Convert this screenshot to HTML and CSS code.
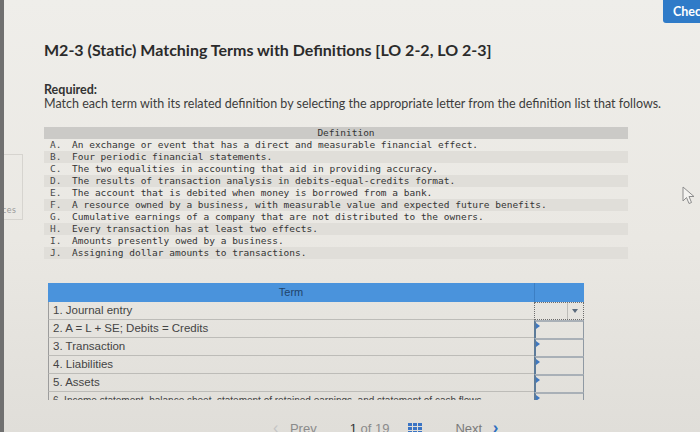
FILE: index.html
```html
<!DOCTYPE html>
<html lang="en">
<head>
    <meta charset="UTF-8">
    <meta name="viewport" content="width=device-width, initial-scale=1.0">
    <title>M2-3 (Static) Matching Terms with Definitions</title>
    <link rel="stylesheet" href="styles.css">
</head>
<body>
    <div class="screen">
        <!-- side tab, mostly off screen -->
        <div class="side-tab"><span>ces</span></div>

        <div class="topbar">
            <button class="check-btn">Check my work</button>
        </div>

        <div class="content">
            <h1>M2-3 (Static) Matching Terms with Definitions [LO 2-2, LO 2-3]</h1>

            <p class="required">Required:</p>
            <p class="instructions">Match each term with its related definition by selecting the appropriate letter from the definition list that follows.</p>

            <!-- definitions -->
            <div class="definitions">
                <div class="def-head">Definition</div>
                <div class="def-row"><span class="def-letter">A.</span><span>An exchange or event that has a direct and measurable financial effect.</span></div>
                <div class="def-row"><span class="def-letter">B.</span><span>Four periodic financial statements.</span></div>
                <div class="def-row"><span class="def-letter">C.</span><span>The two equalities in accounting that aid in providing accuracy.</span></div>
                <div class="def-row"><span class="def-letter">D.</span><span>The results of transaction analysis in debits-equal-credits format.</span></div>
                <div class="def-row"><span class="def-letter">E.</span><span>The account that is debited when money is borrowed from a bank.</span></div>
                <div class="def-row"><span class="def-letter">F.</span><span>A resource owned by a business, with measurable value and expected future benefits.</span></div>
                <div class="def-row"><span class="def-letter">G.</span><span>Cumulative earnings of a company that are not distributed to the owners.</span></div>
                <div class="def-row"><span class="def-letter">H.</span><span>Every transaction has at least two effects.</span></div>
                <div class="def-row"><span class="def-letter">I.</span><span>Amounts presently owed by a business.</span></div>
                <div class="def-row"><span class="def-letter">J.</span><span>Assigning dollar amounts to transactions.</span></div>
            </div>

            <!-- terms -->
            <div class="terms">
                <div class="term-head">
                    <div class="term-head-label">Term</div>
                    <div class="term-head-pick"></div>
                </div>
                <div class="term-row">
                    <div class="term-cell">1. Journal entry</div>
                    <div class="pick-cell">
                        <div class="select"><span class="select-box"></span><span class="select-arrow"></span></div>
                    </div>
                </div>
                <div class="term-row">
                    <div class="term-cell">2. A = L + SE; Debits = Credits</div>
                    <div class="pick-cell"><div class="pick"></div></div>
                </div>
                <div class="term-row">
                    <div class="term-cell">3. Transaction</div>
                    <div class="pick-cell"><div class="pick"></div></div>
                </div>
                <div class="term-row">
                    <div class="term-cell">4. Liabilities</div>
                    <div class="pick-cell"><div class="pick"></div></div>
                </div>
                <div class="term-row">
                    <div class="term-cell">5. Assets</div>
                    <div class="pick-cell"><div class="pick"></div></div>
                </div>
                <div class="term-row">
                    <div class="term-cell term-long">6. Income statement, balance sheet, statement of retained earnings, and statement of cash flows</div>
                    <div class="pick-cell"><div class="pick"></div></div>
                </div>
            </div>

            <!-- pagination -->
            <div class="pager">
                <span class="pager-prev"><span class="chev-left">&lsaquo;</span> Prev</span>
                <span class="pager-count"><b>1</b> of 19</span>
                <span class="pager-grid">
                    <svg width="14" height="11" viewBox="0 0 14 11">
                        <rect x="0" y="0" width="4" height="3" fill="#3b74c4"/>
                        <rect x="5" y="0" width="4" height="3" fill="#3b74c4"/>
                        <rect x="10" y="0" width="4" height="3" fill="#3b74c4"/>
                        <rect x="0" y="4" width="4" height="3" fill="#3b74c4"/>
                        <rect x="5" y="4" width="4" height="3" fill="#3b74c4"/>
                        <rect x="10" y="4" width="4" height="3" fill="#3b74c4"/>
                        <rect x="0" y="8" width="4" height="3" fill="#3b74c4"/>
                        <rect x="5" y="8" width="4" height="3" fill="#3b74c4"/>
                        <rect x="10" y="8" width="4" height="3" fill="#3b74c4"/>
                    </svg>
                </span>
                <span class="pager-next">Next <span class="chev-right">&rsaquo;</span></span>
            </div>
        </div>

        <!-- mouse pointer -->
        <svg class="cursor" width="14" height="20" viewBox="0 0 14 20">
            <path d="M1 1 L1 15 L4.5 11.5 L7 17.5 L9.5 16.5 L7 10.5 L12 10.5 Z" fill="#f4f3f0" stroke="#8d8d8d" stroke-width="1"/>
        </svg>
    </div>
</body>
</html>
```

FILE: styles.css
```css
/* page */
body {
    margin: 0;
    overflow: hidden;
    font-family: Lato, "Open Sans", sans-serif;
    color: #333;
    background: linear-gradient(to bottom, #efeeea 0%, #eae8e3 55%, #e0ded9 100%);
}

.screen {
    position: relative;
    height: 432px;
    border-left: 4px solid #707070;
    overflow: hidden;
}

/* side tab */
.side-tab {
    position: absolute;
    left: 0;
    top: 154px;
    width: 18px;
    height: 64px;
    border: 1px solid #d6d4cf;
    border-left: none;
}

.side-tab span {
    position: absolute;
    left: -2px;
    bottom: 4px;
    font-size: 9px;
    color: #9a9a9a;
    letter-spacing: 0.5px;
}

/* top bar */
.topbar {
    display: flex;
    justify-content: flex-end;
    height: 23px;
}

.check-btn {
    width: 110px;
    margin-right: -73px;
    padding: 0 0 0 10px;
    text-align: left;
    white-space: nowrap;
    font-family: Lato, sans-serif;
    font-size: 12.5px;
    font-weight: 700;
    color: #fff;
    background-color: #2f7bc8;
    border: none;
    border-radius: 0 0 0 3px;
}

.content {
    padding-left: 40px;
}

/* heading */
h1 {
    margin: 17px 0 0;
    font-size: 16px;
    line-height: 20px;
    font-weight: 700;
    color: #2b2b2b;
}

.required {
    margin: 23px 0 0;
    font-size: 12.5px;
    line-height: 14px;
    font-weight: 700;
    color: #333;
}

.instructions {
    margin: 0;
    font-size: 12.5px;
    line-height: 14px;
    color: #3c3c3c;
}

/* definitions list */
.definitions {
    width: 584px;
    margin-top: 16px;
    font-family: "DejaVu Sans Mono", "Liberation Mono", monospace;
    font-size: 9.5px;
    color: #343434;
}

.def-head {
    height: 12px;
    line-height: 12px;
    padding-left: 20px;
    text-align: center;
    background-color: #cbcac7;
}

.def-row {
    display: flex;
    height: 12px;
    line-height: 12px;
}

.def-row:nth-child(odd) {
    background-color: #e0ded9;
}

.def-letter {
    width: 28px;
    padding-left: 6px;
    box-sizing: border-box;
    color: #4a4a4a;
}

/* terms table */
.terms {
    width: 536px;
    height: 117px;
    margin-top: 24px;
    margin-left: 4px;
    overflow: hidden;
    font-family: "Liberation Sans", Arial, sans-serif;
    font-size: 11.5px;
    color: #444;
}

.term-head {
    display: flex;
    height: 19px;
    background-color: #4a93dc;
}

.term-head-label {
    width: 486px;
    line-height: 19px;
    text-align: center;
    font-size: 11px;
    color: #1f436b;
}

.term-head-pick {
    flex: 1;
    border-left: 1px solid #3c7fc4;
}

.term-row {
    display: flex;
    height: 18px;
}

.term-cell {
    width: 486px;
    box-sizing: border-box;
    padding-left: 4px;
    line-height: 17px;
    border-left: 1px solid #9c9c9c;
    border-bottom: 1px solid #bdbcb8;
    white-space: nowrap;
    overflow: hidden;
}

.term-long {
    font-size: 10px;
}

.pick-cell {
    width: 50px;
}

/* dropdown in the first row */
.select {
    display: flex;
    height: 18px;
    box-sizing: border-box;
    border: 1px dotted #6d6d6d;
}

.select-box {
    flex: 1;
}

.select-arrow {
    position: relative;
    width: 15px;
    border-left: 1px solid #bdbcb8;
}

.select-arrow::after {
    content: "";
    position: absolute;
    left: 4px;
    top: 6px;
    border-left: 3.5px solid transparent;
    border-right: 3.5px solid transparent;
    border-top: 4px solid #5a6a7c;
}

/* answer boxes for the other rows */
.pick {
    position: relative;
    height: 18px;
    box-sizing: border-box;
    border-top: 2px solid #a9b0b7;
    border-left: 2px solid #5d7b99;
    border-right: 1px solid #8f99a3;
}

.pick::before {
    content: "";
    position: absolute;
    left: 0;
    top: 1px;
    border-top: 3px solid transparent;
    border-bottom: 3px solid transparent;
    border-left: 4px solid #3f78c0;
}

/* pagination */
.pager {
    display: flex;
    align-items: center;
    height: 20px;
    margin-top: 18px;
    margin-left: 229px;
    font-family: "Liberation Sans", Arial, sans-serif;
    font-size: 13px;
    color: #8b8b8b;
}

.chev-left {
    margin-right: 8px;
    font-size: 16px;
    color: #c4c4c4;
}

.pager-count {
    margin-left: 33px;
}

.pager-count b {
    font-weight: 400;
    color: #333;
}

.pager-grid {
    display: flex;
    margin-left: 19px;
}

.pager-next {
    margin-left: 33px;
    color: #7a7a7a;
}

.chev-right {
    margin-left: 7px;
    font-size: 17px;
    font-weight: 700;
    color: #2f6fc0;
}

/* mouse pointer */
.cursor {
    position: absolute;
    left: 678px;
    top: 186px;
}
```
